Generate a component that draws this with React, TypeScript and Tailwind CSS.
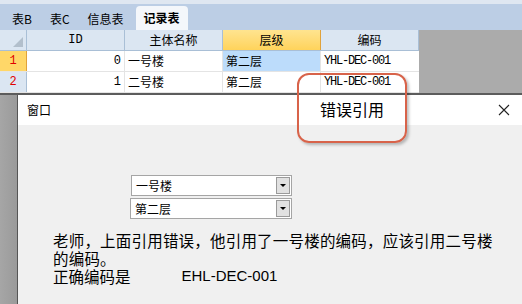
import React from 'react';

const cjk = '"Noto Sans CJK SC", "Liberation Sans", sans-serif';

const cols = [
  { w: 'w-[98px]', title: 'ID' },
  { w: 'w-[98px]', title: '主体名称' },
  { w: 'w-[98px]', title: '层级' },
  { w: 'w-[98px]', title: '编码' },
];

const rows = [
  { n: '1', id: '0', name: '一号楼', level: '第二层', code: 'YHL-DEC-001', active: true },
  { n: '2', id: '1', name: '二号楼', level: '第二层', code: 'YHL-DEC-001', active: false },
];

const Select = ({ value, w }: { value: string; w: string }) => (
  <div className={`flex h-[21px] ${w} items-center border border-[#a5a5a5] bg-white`}>
    <span className="flex-1 pl-[4px] text-[12px] leading-none text-black">{value}</span>
    <span className="mr-[1px] flex h-[17px] w-[14px] items-center justify-center border border-[#9a9a9a] bg-[#e1e1e1]">
      <span className="h-0 w-0 border-x-[3px] border-t-[3px] border-x-transparent border-t-black" />
    </span>
  </div>
);

export default function App() {
  return (
    <div className="relative flex h-[304px] w-[522px] flex-col overflow-hidden bg-[#ababab]" style={{ fontFamily: cjk }}>
      <div className="h-[4px] bg-[#dfe7f1]" />
      {/* sheet tabs */}
      <div className="flex h-[26px] items-end bg-[#bccee5] pl-[3px] text-[12px] text-black">
        <div className="flex h-[22px] items-center px-[9px]">表B</div>
        <div className="flex h-[22px] items-center px-[9px]">表C</div>
        <div className="flex h-[22px] items-center px-[9px]">信息表</div>
        <div className="ml-[3px] flex h-[24px] items-center rounded-t-[4px] bg-[#f4f7fb] px-[8px] font-bold">记录表</div>
      </div>
      {/* grid */}
      <div className="flex">
        <div className="w-[419px] bg-white text-[12px]">
          <div className="flex h-[21px] border-b border-[#a9bfd6] bg-[#dbe6f2]">
            <div className="flex w-[27px] items-end justify-end border-r border-[#a9bfd6] pb-[3px] pr-[3px]">
              <svg width="10" height="10" viewBox="0 0 10 10">
                <path d="M10 0 L10 10 L0 10 Z" fill="#b2bfcc" />
              </svg>
            </div>
            {cols.map((c, i) => (
              <div
                key={c.title}
                className={`flex ${c.w} items-center justify-center border-r ${i === 2 ? 'border-[#e0a23b] bg-gradient-to-b from-[#ffe48f] to-[#ffd35a]' : 'border-[#a9bfd6]'}`}
              >
                {c.title === 'ID' ? <span style={{ fontFamily: '"Liberation Mono", monospace' }}>ID</span> : c.title}
              </div>
            ))}
          </div>
          {rows.map((r) => (
            <div key={r.n} className="flex h-[21px] border-b border-[#e4e4e4]">
              <div
                className={`flex w-[27px] items-center justify-center border-r text-[#e00000] ${r.active ? 'border-[#e0a23b] bg-[#ffd768]' : 'border-[#a9bfd6] bg-[#dbe6f2]'}`}
                style={{ fontFamily: '"Liberation Mono", monospace' }}
              >
                {r.n}
              </div>
              <div className="flex w-[98px] items-center justify-end border-r border-[#e4e4e4] pr-[3px]" style={{ fontFamily: '"Liberation Mono", monospace' }}>
                {r.id}
              </div>
              <div className="flex w-[98px] items-center border-r border-[#e4e4e4] pl-[3px]">{r.name}</div>
              <div className={`flex w-[98px] items-center border-r border-[#e4e4e4] pl-[3px] ${r.active ? 'bg-[#bcdcfb]' : ''}`}>{r.level}</div>
              <div
                className="flex w-[98px] items-center pl-[3px] tracking-[-1.2px]"
                style={{ fontFamily: '"Liberation Mono", monospace' }}
              >
                {r.code}
              </div>
            </div>
          ))}
        </div>
        <div className="flex-1 bg-[#ababab]" />
      </div>
      <div className="h-[2px] bg-[#5c5c5c]" />
      {/* dialog area */}
      <div className="flex flex-1">
        <div className="w-[17px] bg-gradient-to-r from-[#a6a6a6] to-[#9a9a9a]" />
        <div className="flex flex-1 flex-col border-l border-[#555]">
          <div className="flex h-[30px] items-center justify-between bg-white pl-[9px] pr-[8px]">
            <span className="text-[12px] text-black">窗口</span>
            <svg width="12" height="12" viewBox="0 0 12 12" className="mr-[4px]">
              <path d="M1 1 L11 11 M11 1 L1 11" stroke="#222" strokeWidth="1.1" />
            </svg>
          </div>
          <div className="flex flex-1 flex-col bg-[#f0f0f0]">
            <div className="mt-[50px] flex flex-col gap-[2px] pl-[112px]">
              <div className="ml-[1px]">
                <Select value="一号楼" w="w-[161px]" />
              </div>
              <Select value="第二层" w="w-[162px]" />
            </div>
            <div className="mt-[12px] pl-[35px] text-[15.5px] leading-[18px] text-black">
              <p className="w-[452px] tracking-[0.2px]">
                老师，上面引用错误，他引用了一号楼的编码，应该引用二号楼的编码。
              </p>
              <div className="flex h-[18px] items-center">
                <span>正确编码是</span>
                <span className="ml-[51px] text-[15px]" style={{ fontFamily: '"Liberation Sans", sans-serif' }}>
                  EHL-DEC-001
                </span>
              </div>
            </div>
          </div>
        </div>
      </div>
      {/* callout */}
      <div className="absolute left-[297px] top-[73px] flex h-[70px] w-[110px] justify-center rounded-[12px] border-2 border-[#d8634a] pt-[24px] shadow-[2px_2px_3px_rgba(0,0,0,0.25)]">
        <span className="text-[16px] leading-[20px] text-black">错误引用</span>
      </div>
    </div>
  );
}
